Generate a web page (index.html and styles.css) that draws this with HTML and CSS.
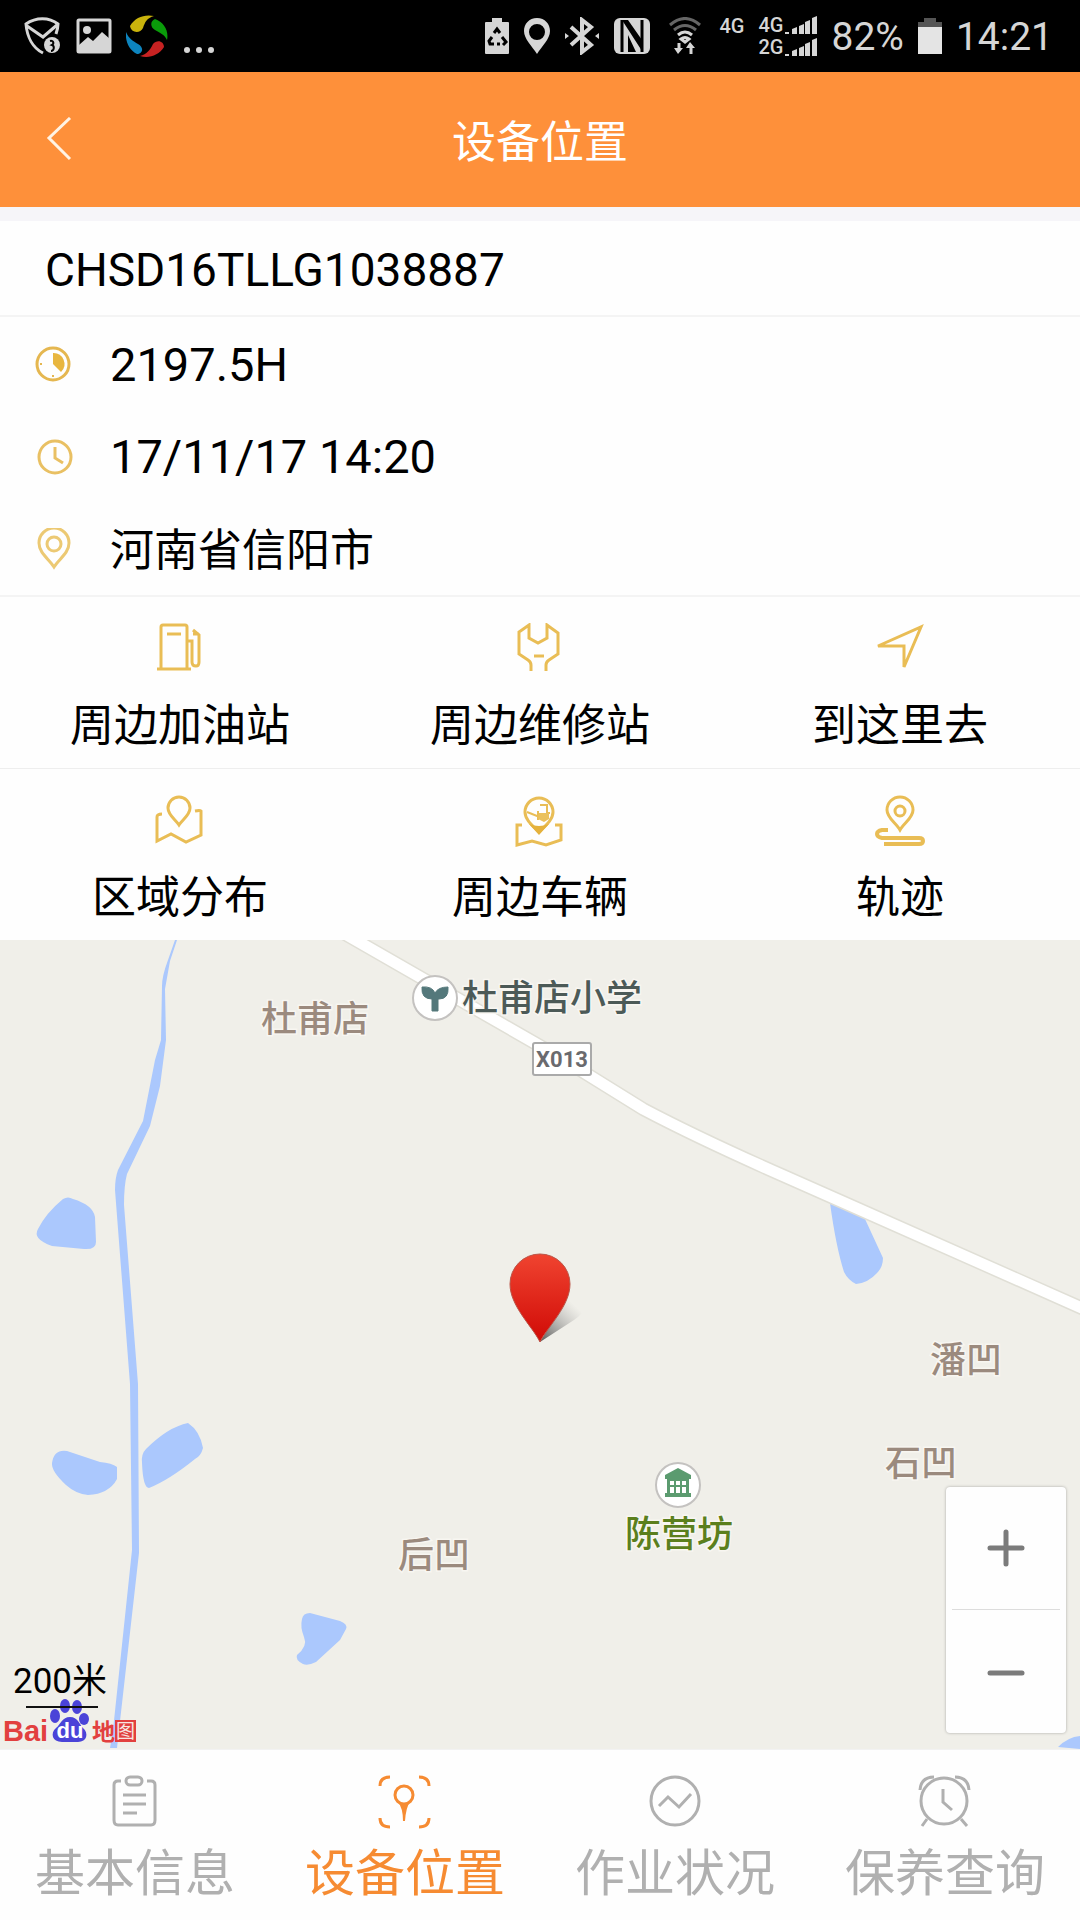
FILE: index.html
```
<!DOCTYPE html>
<html lang="zh-CN">

<head>
    <meta charset="UTF-8">
    <meta name="viewport" content="width=device-width, initial-scale=1.0">
    <title>设备位置</title>
    <link rel="stylesheet" href="styles.css">
</head>

<body>
    <div class="status-bar">
        <div class="status-left">
            <svg width="38" height="38" viewBox="0 0 38 38" fill="none" stroke="#d6d6d6" stroke-width="3">
                <path d="M19 36C9 31 3 20 2 7c10-7 23-7 32 0 0 4-1 7-2 10M3 9l16 11L33 8" />
                <circle cx="28" cy="28" r="8" fill="#d6d6d6" stroke="none" />
                <path d="M26 24c4-1 4 3 2 4 3 1 2 6-1 6" stroke="#000" stroke-width="2" />
            </svg>
            <svg width="36" height="36" viewBox="0 0 36 36">
                <rect x="2" y="2" width="32" height="32" rx="1" fill="none" stroke="#d6d6d6" stroke-width="3" />
                <circle cx="11" cy="12" r="4" fill="#d6d6d6" />
                <path d="M3 27l9-8 5 4 9-9 8 7v13H3z" fill="#d6d6d6" />
            </svg>
            <svg width="42" height="42" viewBox="0 0 42 42">
                <path d="M4 11C9 2 19-1 28 1 21 3 19 7 17 13c-3 6-12 5-13-2z" fill="#c9b30c" />
                <path d="M29 4c9 3 14 12 12 21-3-6-7-7-12-10-5-3-5-9 0-11z" fill="#0a9c0a" />
                <path d="M0 17c3 7 7 9 12 12 7 4 4 10-1 10C3 35-1 26 0 17z" fill="#0d84be" />
                <path d="M14 41c7-2 10-6 13-12 4-5 11-3 11 3-5 8-15 12-24 9z" fill="#c62222" />
            </svg>
            <svg width="36" height="42" viewBox="0 0 36 42" fill="#d6d6d6">
                <circle cx="5" cy="35" r="3" />
                <circle cx="17" cy="35" r="3" />
                <circle cx="29" cy="35" r="3" />
            </svg>
        </div>
        <div class="status-right">
            <svg width="24" height="36" viewBox="0 0 24 36">
                <path d="M1 4h6V0h10v4h6q1 0 1 1v30q0 1-1 1H1q-1 0-1-1V5q0-1 1-1z" fill="#d6d6d6" />
                <path d="M9 15l3-4 3 4M17 19l4 5-3 3M15 26h-3M9 26H5l-1-3 3-4" fill="none" stroke="#000" stroke-width="3" />
            </svg>
            <svg width="28" height="36" viewBox="0 0 28 36">
                <path d="M14 0C6 0 1 6 1 13c0 8 8 15 13 23 5-8 13-15 13-23C27 6 22 0 14 0zm0 6a8 8 0 1 1 0 16 8 8 0 0 1 0-16z" fill="#d6d6d6" fill-rule="evenodd" />
            </svg>
            <svg width="34" height="38" viewBox="0 0 34 38" fill="none" stroke="#d6d6d6" stroke-width="4">
                <path d="M6 10l20 18-9 7V3l9 7L6 28" />
                <path d="M0 16l4 3-4 3zM34 16l-4 3 4 3z" fill="#d6d6d6" stroke="none" />
            </svg>
            <svg width="38" height="36" viewBox="0 0 38 36">
                <rect x="1" width="36" height="36" rx="6" fill="#d6d6d6" />
                <path d="M9 2v32M29 2v32" fill="none" stroke="#000" stroke-width="3" />
                <path d="M9 2l20 31V22L15 2zM15 17l8 17h-8z" fill="#000" />
            </svg>
            <svg width="40" height="38" viewBox="0 0 40 38" fill="none" stroke-width="3">
                <path d="M5 8q15-13 30 0M9 13q11-9 22 0" stroke="#666" />
                <path d="M13 18q7-6 14 0" stroke="#d6d6d6" />
                <path d="M20 25l-4-3q4-3 8 0zM14 26v8M26 29v8" stroke="#d6d6d6" stroke-width="3" />
                <path d="M9 31h9l-5 6zM21 31h9l-5-6z" fill="#d6d6d6" />
            </svg>
            <span class="net">4G</span>
            <div class="sims">
                <div class="sim">
                    <span>4G</span>
                    <svg width="32" height="20" viewBox="0 0 32 20" fill="#d6d6d6">
                        <path d="M0 17h4v2H0zM7 14l5-2v7H7zM14 11l5-2v10h-5zM20 7l5-2v14h-5zM27 3l5-2v18h-5z" />
                    </svg>
                </div>
                <div class="sim">
                    <span>2G</span>
                    <svg width="32" height="20" viewBox="0 0 32 20" fill="#d6d6d6">
                        <path d="M0 17h4v2H0zM7 14l5-2v7H7zM14 11l5-2v10h-5zM20 7l5-2v14h-5zM27 3l5-2v18h-5z" />
                    </svg>
                </div>
            </div>
            <span class="status-text">82%</span>
            <svg width="24" height="36" viewBox="0 0 24 36">
                <path d="M6 0h12v4h6v5H0V4h6z" fill="#555" />
                <path d="M0 9h24v27H0z" fill="#e4e4e4" />
            </svg>
            <span class="status-text">14:21</span>
        </div>
    </div>

    <header class="header">
        <button class="back" type="button" aria-label="返回">
            <svg width="26" height="46" viewBox="0 0 26 46" fill="none" stroke="#fff3e4" stroke-width="3">
                <path d="M24 1L3 21l21 21" />
            </svg>
        </button>
        <h1>设备位置</h1>
    </header>

    <main class="content">
        <h2 class="device-no">CHSD16TLLG1038887</h2>

        <ul class="info">
            <li>
                <svg width="42" height="42" viewBox="0 0 42 42" fill="none" stroke="#e5b750" stroke-width="3">
                    <circle cx="20" cy="20" r="16" />
                    <path d="M20 9a11 11 0 0 1 8 19l-8-8z" fill="#e8b63f" stroke="none" />
                    <path d="M7 20h2M20 31v2" stroke-width="2" />
                </svg>
                <span>2197.5H</span>
            </li>
            <li>
                <svg width="42" height="42" viewBox="0 0 42 42" fill="none" stroke="#e9c063" stroke-width="3">
                    <circle cx="22" cy="21" r="16" />
                    <path d="M22 11v11l8 5" />
                </svg>
                <span>17/11/17 14:20</span>
            </li>
            <li>
                <svg width="42" height="42" viewBox="0 0 42 42" fill="none" stroke="#ecc973" stroke-width="3">
                    <path d="M21 39C16 31 6 25 6 15a15 15 0 0 1 30 0c0 10-10 16-15 24z" />
                    <circle cx="21" cy="16" r="7" />
                </svg>
                <span class="city">河南省信阳市</span>
            </li>
        </ul>

        <div class="actions">
            <button type="button">
                <svg width="50" height="48" viewBox="0 0 50 48" fill="none" stroke="#e9bd55" stroke-width="3">
                    <path d="M6 45V4q0-2 2-2h22q2 0 2 2v41M2 46h34M12 11h14" />
                    <path d="M32 18h5v21q0 4 4 4 3 0 3-4V12l-6-5M38 11h6" />
                </svg>
                <span>周边加油站</span>
            </button>
            <button type="button">
                <svg width="50" height="48" viewBox="0 0 50 48" fill="none" stroke="#e9bd55" stroke-width="3">
                    <path d="M16 48v-6q0-3-3-5l-9-6V9l10-7v13l9 5 9-5V2l11 8v21l-9 6q-3 2-3 5v6M19 33h10" />
                </svg>
                <span>周边维修站</span>
            </button>
            <button type="button">
                <svg width="50" height="48" viewBox="0 0 50 48" fill="none" stroke="#e9bd55" stroke-width="3">
                    <path d="M3 23L46 4 29 44V23z" />
                </svg>
                <span>到这里去</span>
            </button>
            <button type="button">
                <svg width="50" height="50" viewBox="0 0 50 50" fill="none" stroke="#e9bd55" stroke-width="3">
                    <path d="M24 30C20 24 13 20 13 13a11 11 0 0 1 22 0c0 7-7 11-11 17z" />
                    <path d="M7 19q-5 0-5 3v24l14-7 15 8 15-7V16q-1-1-6 0" />
                </svg>
                <span>区域分布</span>
            </button>
            <button type="button">
                <svg width="50" height="52" viewBox="0 0 50 52" fill="none" stroke="#e9bd55" stroke-width="3">
                    <path d="M24 37C18 31 10 25 10 17a14 14 0 0 1 28 0c0 8-8 14-14 20z" />
                    <path d="M14 29q10 4 20 0l-10 11z" fill="#e5b23c" stroke="none" />
                    <path d="M12 17l10 4h12M25 10h7v8h3M23 16v9" stroke-width="2" />
                    <path d="M24 18h10v6l-5 3-6-3z" fill="#ebc15c" stroke="none" />
                    <path d="M7 30H2v20l15-4 14 4 15-5V30h-6" />
                </svg>
                <span>周边车辆</span>
            </button>
            <button type="button">
                <svg width="50" height="52" viewBox="0 0 50 52" fill="none" stroke="#e9bd55" stroke-width="3">
                    <path d="M25 35C21 28 12 23 12 15a13 13 0 0 1 26 0c0 8-9 13-13 20z" />
                    <circle cx="25" cy="16" r="5" />
                    <path d="M13 35H7q-5 1-5 4t5 4h37q4 0 4 3t-4 3H9" stroke-width="4" />
                </svg>
                <span>轨迹</span>
            </button>
        </div>
    </main>

    <section class="map">
        <svg class="map-tiles" viewBox="0 0 1080 809" preserveAspectRatio="xMidYMid slice">
            <!-- water -->
            <g fill="#abc8fd">
                <path d="M175 0L168 20Q162 36 162 46L161 100 155 120 143 181 118 230Q115 238 115 250L130 444 132 610 113 790 110 808H117L119 790 139 613 138 444 124 265Q124 245 127 234L150 186 160 146 166 100 165 49 170 21 177 0z" />
                <path d="M63 259q5-3 10 0 20 6 22 18l1 25q0 8-12 7l-32-3q-20-7-14-17 8-16 25-30z" />
                <path d="M52 523q2-14 15-12l33 11q12 1 17 5v12q-8 15-29 16-12-1-22-10-15-14-14-22z" />
                <path d="M142 523q-1-9 4-14 22-22 42-26 12 8 15 25-2 8-8 11-26 21-46 29-6 0-7-25z" />
                <path d="M302 679q1-6 8-6l30 8q8 3 6 8l-6 11-24 22q-8 4-13 2-8-4-6-9 11-9 7-18-4-10-2-18z" />
                <path d="M830 263l28 9q5 2 7 7l18 39q0 9-6 15-9 10-21 11-8-4-12-12-8-25-14-69z" />
                <path d="M1058 807q10-10 22-11v13z" />
            </g>
            <!-- road X013 -->
            <path class="road-edge" d="M345-6L561 118 643 169Q700 199 784 236L845 263 1084 369" />
            <path class="road" d="M345-6L561 118 643 169Q700 199 784 236L845 263 1084 369" />
            <rect x="533" y="103" width="58" height="32" rx="2" fill="#fff" stroke="#aaa" stroke-width="2" />
            <text class="road-no" x="562" y="127">X013</text>
            <!-- points of interest -->
            <circle class="poi" cx="435" cy="58" r="22" />
            <path d="M422 47q10-1 13 6 3-6 13-6 1 12-9 12h-1v12h-6V59q-11 0-10-12z" fill="#54787b" stroke="#54787b" />
            <circle class="poi" cx="678" cy="545" r="22" />
            <path d="M665 539v-4l13-7 13 7v4h-2v14h2v4h-26v-4h2v-14zm5 2v4h4v-4zm6 0v4h4v-4zm6 0v4h4v-4zm-12 6v6h4v-6zm6 0v6h4v-6zm6 0v6h4v-6z" fill="#5b9b6f" fill-rule="evenodd" />
            <g class="place">
                <text x="315" y="92">杜甫店</text>
                <text x="966" y="433">潘凹</text>
                <text x="921" y="536">石凹</text>
                <text x="434" y="628">后凹</text>
                <text class="school" x="552" y="71">杜甫店小学</text>
                <text class="scenic" x="679" y="607">陈营坊</text>
            </g>
        </svg>

        <svg class="marker" width="100" height="94" viewBox="0 0 100 94">
            <defs>
                <linearGradient id="pin" x1="0" y1="0" x2="0" y2="1">
                    <stop offset="0" stop-color="#f04430" />
                    <stop offset="1" stop-color="#d00a06" />
                </linearGradient>
                <linearGradient id="shade" x1="0" y1="1" x2="1" y2="0">
                    <stop offset="0" stop-color="#444" stop-opacity=".9" />
                    <stop offset=".8" stop-color="#999" stop-opacity="0" />
                </linearGradient>
            </defs>
            <path d="M50 90C62 72 70 46 84 46c18 0 12 14 0 22z" fill="url(#shade)" />
            <path d="M50 90C42 74 20 54 20 32a30 30 0 0 1 60 0c0 22-22 42-30 58z" fill="url(#pin)" stroke="#bb5548" />
        </svg>

        <div class="scale">200米</div>
        <svg class="logo" width="140" height="50" viewBox="0 0 140 50">
            <g fill="#4a43d8">
                <ellipse cx="55" cy="19" rx="5" ry="7" />
                <ellipse cx="65" cy="9" rx="5" ry="7" />
                <ellipse cx="77" cy="10" rx="5" ry="7" />
                <ellipse cx="84" cy="22" rx="5" ry="6" />
                <path d="M70 20c8 0 9 7 13 11 6 5 4 14-5 14H62c-10 0-12-9-6-14 5-4 6-11 14-11z" />
            </g>
            <text class="logo-bai" x="3" y="44">Bai</text>
            <text class="logo-du" x="70" y="41">du</text>
            <rect x="115" y="23" width="21" height="22" fill="#e2403f" />
            <text class="logo-map" x="92" y="43">地</text>
            <text class="logo-tu" x="116" y="41">图</text>
            <path d="M26 10h72" stroke="#111" stroke-width="2" />
        </svg>

        <div class="zoom">
            <button type="button" aria-label="放大">
                <svg width="38" height="38" viewBox="0 0 38 38" stroke="#7b7b7b" stroke-width="5" stroke-linecap="round">
                    <path d="M3 19h32M19 3v32" />
                </svg>
            </button>
            <button type="button" aria-label="缩小">
                <svg width="38" height="38" viewBox="0 0 38 38" stroke="#7b7b7b" stroke-width="5" stroke-linecap="round">
                    <path d="M3 20h32" />
                </svg>
            </button>
        </div>
    </section>

    <nav class="tabs">
        <a href="#">
            <svg width="54" height="52" viewBox="0 0 54 52" fill="none" stroke="currentColor" stroke-width="3">
                <path d="M13 6h-3q-4 0-4 4v35q0 5 4 5h33q4 0 4-5V10q0-4-4-4h-4" />
                <rect x="18" y="2" width="16" height="8" rx="4" />
                <path d="M15 20h23M15 29h23M15 38h14" />
            </svg>
            <span>基本信息</span>
        </a>
        <a href="#" class="active">
            <svg width="54" height="54" viewBox="0 0 54 54" fill="none" stroke="currentColor" stroke-width="3">
                <path d="M2 11q0-9 10-9M41 2q10 0 10 9M2 43q0 9 10 9M41 52q10 0 10-9" />
                <circle cx="26" cy="20" r="9" />
                <path d="M20 27q5 4 12 0-4 5-5 19h-2q0-13-5-19z" fill="currentColor" stroke="none" />
            </svg>
            <span>设备位置</span>
        </a>
        <a href="#">
            <svg width="54" height="52" viewBox="0 0 54 52" fill="none" stroke="currentColor" stroke-width="3">
                <circle cx="27" cy="26" r="24" />
                <path d="M11 31l9-9 11 10 12-13" />
            </svg>
            <span>作业状况</span>
        </a>
        <a href="#">
            <svg width="54" height="52" viewBox="0 0 54 52" fill="none" stroke="currentColor" stroke-width="3">
                <circle cx="26" cy="26" r="23" />
                <path d="M2 15Q3 2 16 2M37 2q13 0 14 13M9 44l-5 7M43 44l6 7" />
                <path d="M25 14v13l9 8" />
            </svg>
            <span>保养查询</span>
        </a>
    </nav>
</body>

</html>
```
FILE: styles.css
```
* {
    box-sizing: border-box;
}

body {
    margin: 0;
    min-height: 100vh;
    display: flex;
    flex-direction: column;
    background: #fefefe;
    color: #000;
    font-family: Roboto, "Noto Sans CJK SC", sans-serif;
    font-size: 44px;
}

svg {
    display: block;
    flex-shrink: 0;
}

button {
    margin: 0;
    padding: 0;
    border: 0;
    background: none;
    color: inherit;
    font: inherit;
    cursor: pointer;
}

/* status bar */
.status-bar {
    height: 72px;
    padding: 0 27px 0 24px;
    display: flex;
    justify-content: space-between;
    align-items: center;
    background: #000;
    color: #d6d6d6;
}

.status-left,
.status-right {
    display: flex;
    align-items: center;
    gap: 14px;
}

.net,
.sims {
    font-size: 20px;
    font-weight: 500;
    line-height: 22px;
}

.net {
    align-self: flex-start;
    padding-top: 2px;
}

.sim {
    display: flex;
    align-items: center;
    gap: 2px;
}

.status-text {
    padding-top: 2px;
    font-size: 39px;
    line-height: 44px;
}

/* header */
.header {
    position: relative;
    height: 135px;
    display: flex;
    align-items: center;
    justify-content: center;
    background: #fe903a;
    color: #fff;
}

.header h1 {
    margin: 0;
    padding-top: 7px;
    font-size: 44px;
    font-weight: 400;
    line-height: 64px;
}

.back {
    position: absolute;
    left: 46px;
}

/* device info */
.content {
    border-top: 14px solid #f6f5f9;
}

.device-no {
    margin: 0;
    padding: 4px 45px 0;
    border-bottom: 2px solid #f4f4f4;
    font-size: 46px;
    font-weight: 400;
    line-height: 90px;
}

.info {
    margin: 0;
    padding: 2px 0 0 33px;
    border-bottom: 2px solid #f4f4f4;
    list-style: none;
    font-size: 47px;
    line-height: 92px;
}

.info li {
    height: 92px;
    display: flex;
    align-items: center;
    gap: 35px;
}

.info .city {
    padding-top: 4px;
    font-size: 44px;
}

.actions {
    display: grid;
    grid-template-columns: repeat(3, 1fr);
}

.actions button {
    height: 171px;
    padding: 26px 0 15px;
    display: flex;
    flex-direction: column;
    align-items: center;
    justify-content: space-between;
    line-height: 54px;
}

.actions button:nth-child(-n+3) {
    height: 172px;
    border-bottom: 1px solid #eee;
}

/* map */
.map {
    position: relative;
    flex: 1;
    min-height: 600px;
    overflow: hidden;
    background: #f0efe9;
}

.map-tiles {
    position: absolute;
    width: 100%;
    height: 100%;
}

.road-edge,
.road {
    fill: none;
    stroke: #e0dfd6;
    stroke-width: 14;
}

.road {
    stroke: #fff;
    stroke-width: 11;
}

.road-no {
    fill: #6a6a6e;
    font-size: 22px;
    font-weight: 700;
    text-anchor: middle;
}

.poi {
    fill: #fff;
    stroke: #c4c2c0;
    stroke-width: 2;
}

.place {
    fill: #9b8a7e;
    stroke: #f8f6f1;
    stroke-width: 3;
    paint-order: stroke;
    font-size: 36px;
    font-weight: 500;
    text-anchor: middle;
}

.school {
    fill: #4c5a57;
}

.scenic {
    fill: #5b7f1d;
}

.marker {
    position: absolute;
    left: 50%;
    top: 50%;
    margin: -93px 0 0 -50px;
}

.scale {
    position: absolute;
    left: 13px;
    bottom: 47px;
    font-size: 35px;
    line-height: 40px;
}

.logo {
    position: absolute;
    left: 0;
    bottom: 2px;
}

.logo-bai,
.logo-du {
    fill: #e2403f;
    font-family: "Liberation Sans", sans-serif;
    font-size: 29px;
    font-weight: 700;
}

.logo-du {
    fill: #fff;
    font-size: 22px;
    text-anchor: middle;
}

.logo-map,
.logo-tu {
    fill: #e2403f;
    font-size: 23px;
    font-weight: 700;
}

.logo-tu {
    fill: #f7e6e2;
    font-size: 19px;
    font-weight: 400;
}

.zoom {
    position: absolute;
    right: 14px;
    bottom: 16px;
    width: 120px;
    padding: 0 6px;
    border-radius: 4px;
    background: #fefefe;
    box-shadow: 0 0 3px rgba(0, 0, 0, 0.3);
}

.zoom button {
    width: 100%;
    height: 122px;
    display: flex;
    align-items: center;
    justify-content: center;
}

.zoom button + button {
    height: 124px;
    border-top: 1px solid #ddd;
}

/* bottom tabs */
.tabs {
    display: grid;
    grid-template-columns: repeat(4, 1fr);
    border-top: 1px solid #f2f2f2;
}

.tabs a {
    height: 170px;
    padding: 25px 0 16px;
    display: flex;
    flex-direction: column;
    align-items: center;
    justify-content: space-between;
    color: #b0b0b0;
    font-size: 50px;
    line-height: 60px;
    text-decoration: none;
}

.tabs .active {
    color: #f68b32;
}
```
